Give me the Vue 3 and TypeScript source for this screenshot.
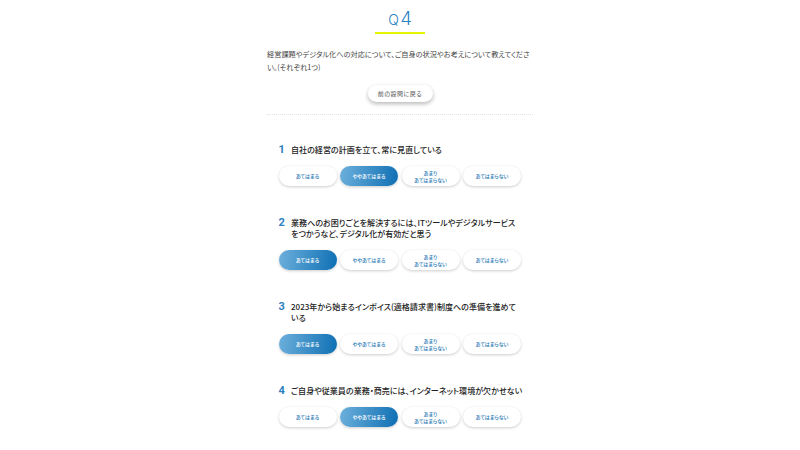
<script setup lang="ts">
interface Question { no: number; text: string; selected: number }
const options: string[][] = [['あてはまる'], ['ややあてはまる'], ['あまり', 'あてはまらない'], ['あてはまらない']]
const questions: Question[] = [
  { no: 1, text: '自社の経営の計画を立て、常に見直している', selected: 1 },
  { no: 2, text: '業務へのお困りごとを解決するには、ITツールやデジタルサービス\nをつかうなど、デジタル化が有効だと思う', selected: 0 },
  { no: 3, text: '2023年から始まるインボイス(適格請求書)制度への準備を進めて\nいる', selected: 0 },
  { no: 4, text: 'ご自身や従業員の業務・商売には、インターネット環境が欠かせない', selected: 1 },
]
</script>

<template>
  <main class="page">
    <header class="head">
      <h1 class="qno"><span class="q">Q</span><span class="n">4</span></h1>
    </header>
    <p class="lead">経営課題やデジタル化への対応について、ご自身の状況やお考えについて教えてください。(それぞれ1つ)</p>
    <div class="back-wrap"><button class="back">前の設問に戻る</button></div>
    <section class="list">
      <article v-for="q in questions" :key="q.no" class="item">
        <h2 class="title"><span class="num">{{ q.no }}</span><span class="txt">{{ q.text }}</span></h2>
        <div class="opts">
          <button v-for="(o, i) in options" :key="i" class="opt" :class="{ on: i === q.selected }">
            <span v-for="l in o" :key="l">{{ l }}</span>
          </button>
        </div>
      </article>
    </section>
  </main>
</template>

<style>
html, body { margin: 0; background: #fff; overflow: hidden; }
</style>

<style scoped>
.page {
  width: 266px;
  margin: 0 auto;
  padding-top: 8px;
  font-family: "Noto Sans CJK JP", "Noto Sans", sans-serif;
  font-feature-settings: "palt";
  color: #333;
}
.head { display: flex; justify-content: center; }
.qno {
  width: 50px;
  height: 24px;
  margin: 0;
  border-bottom: 2px solid #e6f500;
  display: flex;
  justify-content: center;
  align-items: baseline;
  gap: 1.5px;
  font-family: Inter, sans-serif;
  font-weight: 300;
  color: #2a80c0;
  line-height: 22px;
}
.q { font-size: 14px; font-weight: 300; }
.n { font-size: 18px; font-weight: 300; }
.lead {
  margin: 14px 0 0;
  font-size: 7.2px;
  line-height: 13px;
  color: #444;
  word-break: break-all;
}
.back-wrap { display: flex; justify-content: center; margin-top: 11px; }
.back {
  width: 65px;
  height: 17px;
  padding: 0;
  border: 0;
  border-radius: 9px;
  background: #fff;
  box-shadow: 0 2px 4px rgba(0, 0, 0, 0.28);
  font: inherit;
  font-size: 6px;
  letter-spacing: 0.5px;
  color: #555;
}
.list {
  margin-top: 12px;
  border-top: 1px dotted #e2e2e2;
  padding-top: 29px;
}
.item { padding: 0 0 0 11.5px; margin-bottom: 31.2px; }
.title {
  margin: 0 0 10px;
  display: flex;
  font-size: 8.05px;
  line-height: 11.5px;
  font-weight: 500;
  color: #222;
}
.num {
  flex: 0 0 12.5px;
  color: #2a80c0;
  font-family: Roboto, sans-serif;
  font-weight: 700;
  font-size: 11px;
}
.txt { flex: 1; min-width: 0; padding-right: 8px; word-break: break-all; white-space: pre-line; }
.opts { display: flex; gap: 3.5px; }
.opt {
  flex: 0 0 58px;
  height: 20px;
  padding: 0;
  border: 0;
  border-radius: 10px;
  background: #fff;
  box-shadow: 0 1px 3px rgba(0, 0, 0, 0.2);
  font: inherit;
  font-size: 5px;
  line-height: 7px;
  font-weight: 500;
  color: #2a7ab5;
  display: flex;
  flex-direction: column;
  align-items: center;
  justify-content: center;
}
.opt.on {
  background: linear-gradient(100deg, #6db0dc 0%, #0e6fb3 100%);
  color: #fff;
}
</style>
